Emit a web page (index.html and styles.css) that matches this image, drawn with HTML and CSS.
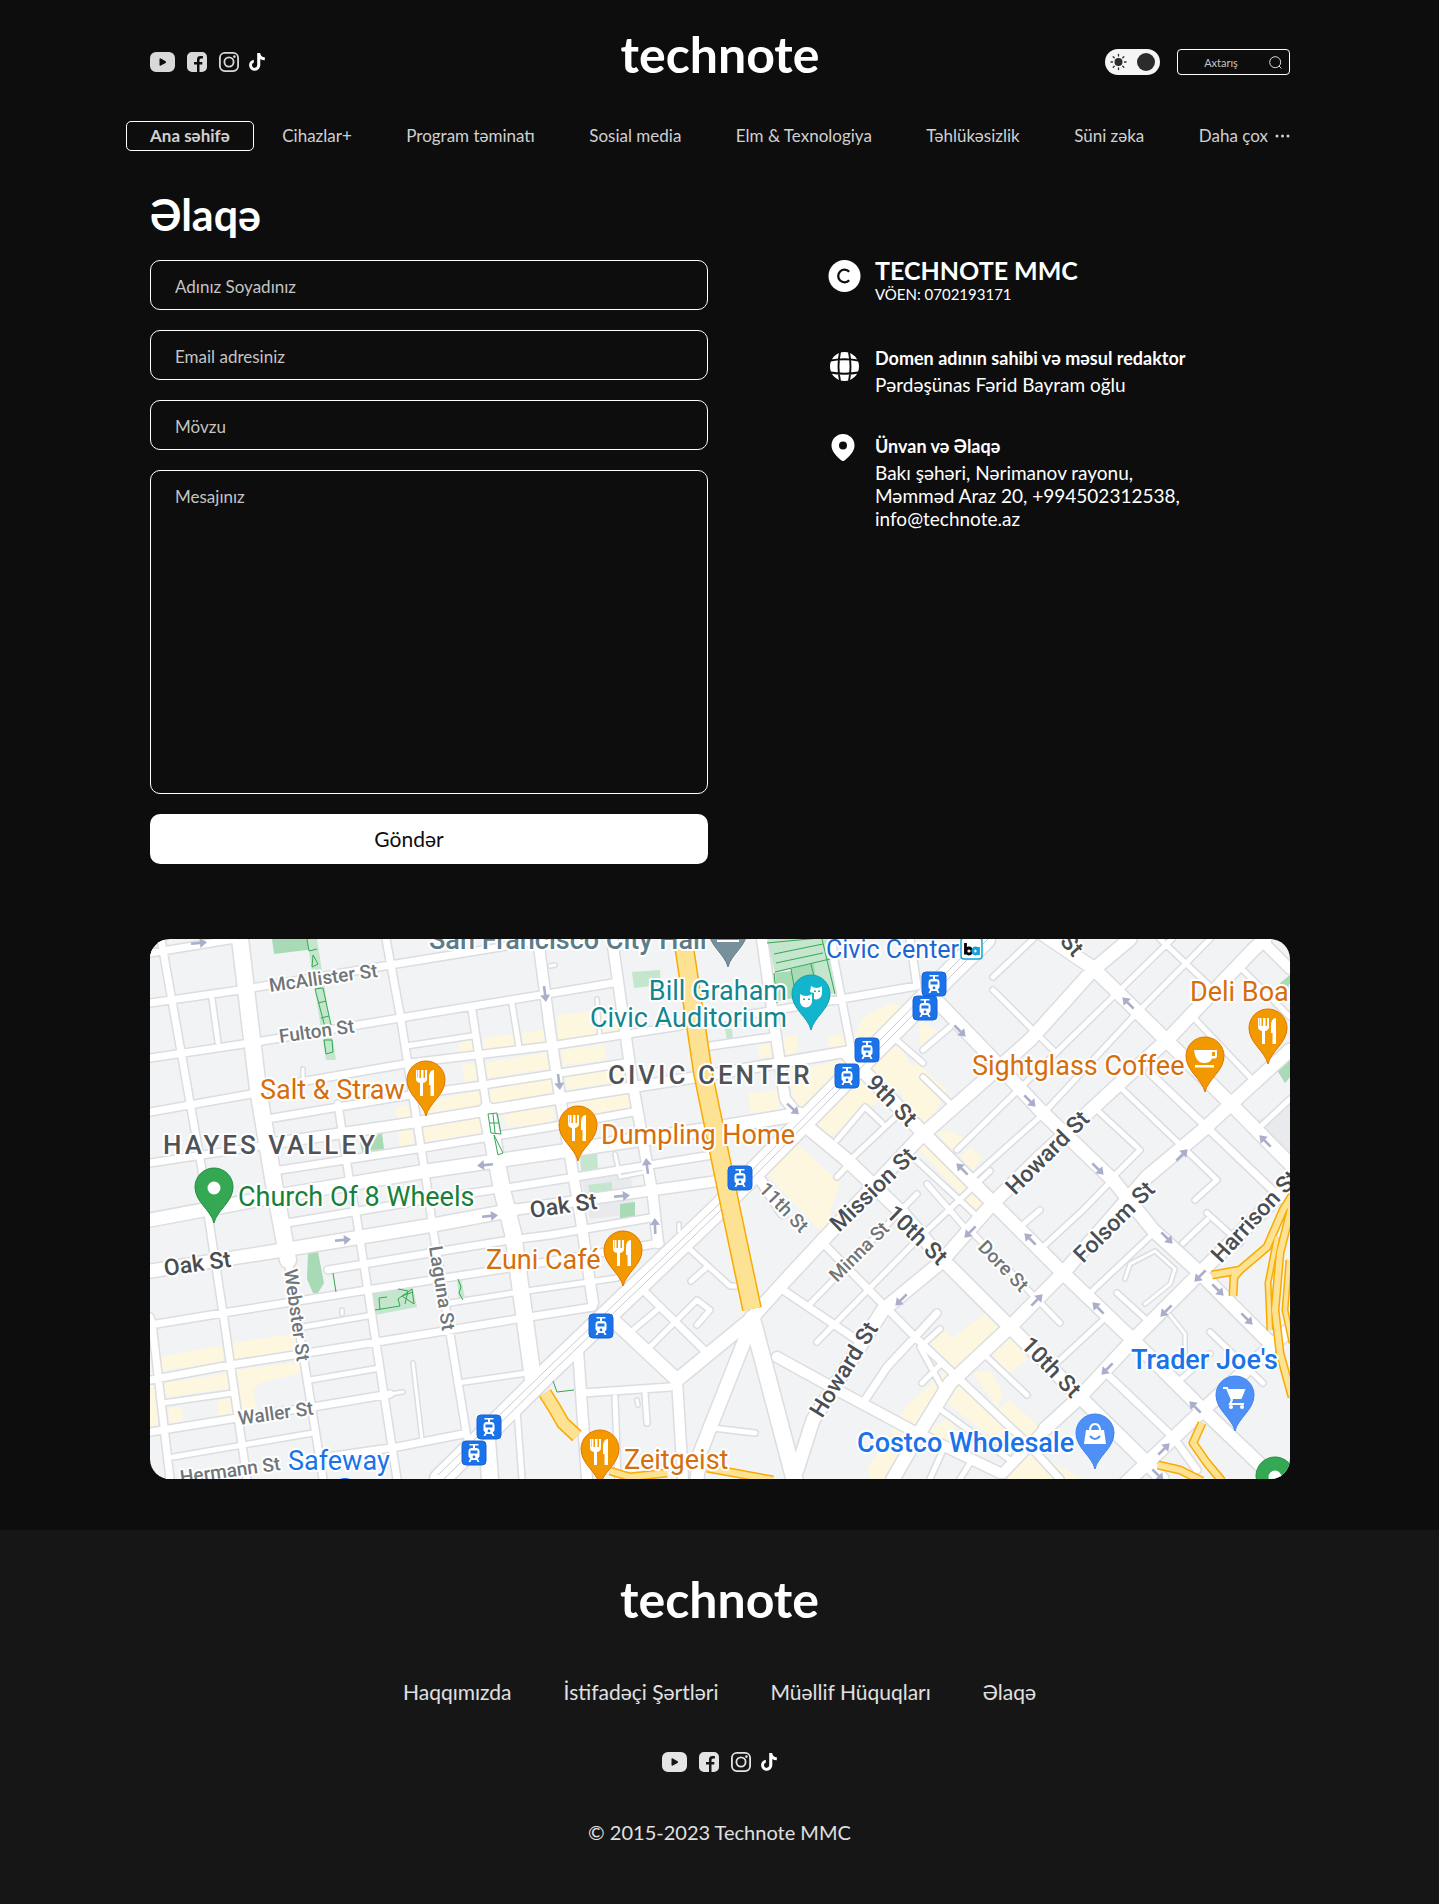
FILE: index.html
```html
<!DOCTYPE html>
<html lang="az">
<head>
<meta charset="utf-8">
<meta name="viewport" content="width=device-width, initial-scale=1">
<title>Əlaqə – technote</title>
<link rel="stylesheet" href="styles.css">
</head>
<body>
<svg class="defs" aria-hidden="true">
  <symbol id="i-youtube" viewBox="0 0 25 20"><path fill="currentColor" fill-rule="evenodd" d="M6 0h13a6 6 0 0 1 6 6v8a6 6 0 0 1-6 6H6a6 6 0 0 1-6-6V6a6 6 0 0 1 6-6zM9.500 7.200v5.600q0 1.400 1.300.8l4.800-2.700q1-.8 0-1.600l-4.800-2.800q-1.300-.7-1.300.7z"/></symbol>
  <symbol id="i-facebook" viewBox="0 0 20 20"><path fill="currentColor" d="M5 0h10a5 5 0 0 1 5 5v10a5 5 0 0 1-5 5h-2.500v-7.500h2.800V10h-2.800V8q0-1.600 1.600-1.600h1.800V4h-2.400Q10 4 10 7.400V10H7v2.500h3V20H5a5 5 0 0 1-5-5V5a5 5 0 0 1 5-5z"/></symbol>
  <symbol id="i-instagram" viewBox="0 0 20 20"><g fill="none" stroke="currentColor" stroke-width="1.800"><rect x=".9" y=".9" width="18.200" height="18.200" rx="5"/><circle cx="10" cy="10" r="4.600"/></g><circle cx="15.400" cy="4.600" r="1.300" fill="currentColor"/></symbol>
  <symbol id="i-tiktok" viewBox="0 0 16 18"><path fill="currentColor" d="M8.200 0h3q.3 3.900 4.600 4.300v3q-2.600 0-4.500-1.400v6.300a5.600 5.600 0 1 1-6.500-5.500v3.100a2.600 2.600 0 1 0 3.400 2.500z"/></symbol>
</svg>

<div class="wrap">
  <header class="top">
    <div class="social">
      <a href="#" aria-label="YouTube"><svg width="25" height="20"><use href="#i-youtube"/></svg></a>
      <a href="#" aria-label="Facebook"><svg width="20" height="20"><use href="#i-facebook"/></svg></a>
      <a href="#" aria-label="Instagram"><svg width="20" height="20"><use href="#i-instagram"/></svg></a>
      <a class="tiktok" href="#" aria-label="TikTok"><svg width="16" height="18"><use href="#i-tiktok"/></svg></a>
    </div>
    <a class="logo" href="#">technote</a>
    <div class="tools">
      <label class="theme">
        <input type="checkbox" aria-label="Tünd rejim" checked>
        <svg width="55" height="26" viewBox="0 0 55 26"><rect width="55" height="26" rx="13" fill="#f5f5f5"/><circle cx="13.500" cy="13" r="4" fill="#2b2b2b"/><path stroke="#2b2b2b" stroke-width="1.300" stroke-linecap="round" d="M13.500 5.500v1.500M13.500 19v1.500M6 13h1.500M19.500 13H21M8.200 7.700l1 1M17.800 17.300l1 1M8.200 18.300l1-1M17.800 8.700l1-1"/><circle cx="41" cy="13" r="9" fill="#2b2b2b"/></svg>
      </label>
      <label class="search">
        <input type="search" placeholder="Axtarış" aria-label="Axtarış">
        <svg width="13" height="13" viewBox="0 0 13 13" fill="none" stroke="#d9d9d9"><circle cx="6.200" cy="6.200" r="5.500"/><path d="M10.200 10.200l2 2" stroke-linecap="round"/></svg>
      </label>
    </div>
  </header>

  <nav class="menu">
    <a class="active" href="#">Ana səhifə</a>
    <a href="#">Cihazlar+</a>
    <a href="#">Program təminatı</a>
    <a href="#">Sosial media</a>
    <a href="#">Elm &amp; Texnologiya</a>
    <a href="#">Təhlükəsizlik</a>
    <a href="#">Süni zəka</a>
    <a class="more" href="#">Daha çox <svg width="15" height="4" viewBox="0 0 15 4" fill="currentColor"><circle cx="2" cy="2" r="1.500"/><circle cx="7.500" cy="2" r="1.500"/><circle cx="13" cy="2" r="1.500"/></svg></a>
  </nav>

  <main>
    <h1>Əlaqə</h1>
    <div class="columns">
      <form class="contact">
        <input type="text" placeholder="Adınız Soyadınız" aria-label="Adınız Soyadınız">
        <input type="email" placeholder="Email adresiniz" aria-label="Email adresiniz">
        <input type="text" placeholder="Mövzu" aria-label="Mövzu">
        <textarea placeholder="Mesajınız" aria-label="Mesajınız"></textarea>
        <button type="button">Göndər</button>
      </form>
      <div class="info">
        <section>
          <svg width="33" height="32" viewBox="0 0 33 32"><circle cx="16.500" cy="16" r="16" fill="#fff"/><path d="M21.200 11.800a6.300 6.300 0 1 0 0 8.400" fill="none" stroke="#0d0d0d" stroke-width="2.300"/></svg>
          <div><h2>TECHNOTE MMC</h2><p class="tax">VÖEN: 0702193171</p></div>
        </section>
        <section>
          <svg class="globe" width="33" height="29" viewBox="0 0 33 29"><circle cx="16.500" cy="14.500" r="14.500" fill="#fff"/><g fill="none" stroke="#0d0d0d" stroke-width="1.900"><path d="M12 0Q9 14.500 12 29M21 0q3 14.500 0 29M1 8.800q15.500-3 31 0M1 20.200q15.500 3 31 0"/></g></svg>
          <div><h3>Domen adının sahibi və məsul redaktor</h3><p>Pərdəşünas Fərid Bayram oğlu</p></div>
        </section>
        <section>
          <svg width="30" height="27" viewBox="0 0 30 27"><path fill="#fff" fill-rule="evenodd" d="M15 0a11.500 11.500 0 0 1 11.500 11.500c0 6-5 10.500-9.300 14.600q-2.200 1.800-4.400 0C8.500 22 3.500 17.500 3.500 11.500A11.500 11.500 0 0 1 15 0zm0 7.500a4 4 0 1 0 0 8 4 4 0 0 0 0-8z"/></svg>
          <div><h3>Ünvan və Əlaqə</h3><p>Bakı şəhəri, Nərimanov rayonu,<br>Məmməd Araz 20, +994502312538,<br>info@technote.az</p></div>
        </section>
      </div>
    </div>

    <svg class="map" viewBox="0 0 1140 540" preserveAspectRatio="xMidYMid slice" role="img" aria-label="Xəritə">
      <defs>
        <g id="roads">
          <path class="w22" d="M290 540L400 431L567 271L800 34L835 0"/>
          <path class="w16" d="M90 0L108 150L124 245L138 321M337 171L353 255L363 294L383 440M602 380L613 421L647 550M337 501L340 540"/>
          <path class="w14" d="M0 332L133 311L283 286L363 271M0 281L133 256L277 232L400 214L560 190L650 175M527 441L600 381L633 344L673 301L770 198L880 101L943 31L980 0M647 531L663 481L733 371L790 324L843 264L890 218L970 144L1020 98L1103 11L1115 0M743 540L773 488L800 444L860 388L913 334L997 238L1053 191L1082 164L1140 111M895 490L930 458L983 401L1050 334L1140 245M975 545L997 524L1053 471L1140 390M697 115L777 198L843 264L913 334L983 401L1053 471L1125 540M650 182L697 221L753 275L790 318L860 388L930 458L997 524L1012 540M783 58L837 114L890 171L963 241L1003 291L1050 334L1120 404M893 -5L943 29L1013 98L1080 164L1140 225M463 381L527 441M600 388L550 514L547 540"/>
          <path class="w10" d="M388 0L400 91L410 158L427 258L432 288L443 364M462 0L482 141L503 258L508 304M612 0L627 104L635 160L650 178M125 204L267 183L400 161L547 138L700 112M363 271L483 254L575 241M1110 0L1140 30M527 441L533 540M428 411L437 540M627 418L687 451L767 494L850 534M853 534L895 490M603 230L633 274"/>
          <path class="w8" d="M11 0L52 231L58 275L73 374L97 540M0 378L2 384L20 540M138 321L173 540M236 0L250 75L277 247L283 291L317 498M188 165L200 245L207 281L247 540M322 71L337 171M682 0L684 21L702 114M760 0L767 47L627 71L540 84M0 14L85 0M0 64L90 51L240 26L400 0M0 119L100 104L250 79L397 55L463 44M0 173L107 154M150 143L260 124L400 107L530 87M123 179L260 156L333 146L475 124M0 224L124 205M130 231L273 209L400 188L483 173M137 284L280 260L363 248L562 216M178 331L280 314L360 301L400 296L500 279M0 386L73 374L217 351L360 329L510 304M0 441L80 426L227 403L373 379L443 368M0 493L87 479L163 468L240 455M170 519L247 508L313 495M560 107L622 98M673 304L717 349L765 398L807 438L877 504L910 540M633 351L707 401M467 374L493 351L557 414M433 454L520 448M713 464L737 428L765 398L787 374M1000 134L1140 268M960 438L1023 498L1047 531"/>
          <path class="w6" d="M62 60L68 103M362 65L369 108M256 107L322 97M153 388L223 376M300 364L363 354L467 339M13 464L83 454M160 441L230 429M307 444L377 434M23 518L163 494M1010 0L1065 52M1090 28L1140 78M1043 78L1100 138M970 148L1067 241L1045 261M947 171L987 208M963 238L990 211M843 51L903 111M843 38L883 0M807 211L970 51L1022 0M823 238L890 178L983 78L1060 0M700 221L753 171M687 201L715 168L732 184M687 238L700 224M743 98L773 124M773 111L800 88M773 138L803 167M533 304L580 347L590 347M541 342L557 328M483 391L507 371M500 408L547 361L560 371L547 386M465 458L468 540M495 454L497 484M563 489L605 494M657 368L767 255M667 403L767 301L840 232M772 444L790 426M367 471L372 540M967 354L1000 384M837 418L877 456M787 468L860 521M870 288L890 271M893 308L933 271L965 238M940 354L1007 291M910 421L953 381M1033 304L1057 281M1057 274L1090 304M820 291L910 384M1060 393L1113 444M1030 441L1060 415M777 245L817 291M780 540L793 511M810 540L820 524M1107 191L1140 160M765 220L830 280M790 390L770 408L793 450"/>
          <path class="w4" d="M263 424L272 501M240 455L253 453M450 100L447 60M405 26L400 27M153 143V130M192 375V371M487 461L488 466M529 285V292M975 340L980 325L1005 312L1025 330L1020 345L995 365M1020 376L1035 395V420M495 233L470 238M465 215L470 238"/>
        </g>
        <g id="highways">
          <path class="h20" d="M533 0L553 134L581 271L602 370"/>
          <path class="h12" d="M395 454L405 470L413 484L427 497"/>
          <path class="h8" d="M1062 336L1090 331L1117 308L1133 271L1145 252M1083 357L1084 338L1090 331M1142 458L1130 414L1125 371L1130 314L1143 262M1052 484L1043 504L1057 524L1072 542M1008 526L1030 531L1052 542M460 532L480 538L517 534M557 529L623 541"/>
          <path class="h5" d="M1120 391L1118 344L1127 298M1142 404L1135 371L1139 321"/>
        </g>
        <path id="pin" d="M0 0C-3-13-19-21-19-36A19 19 0 1 1 19-36C19-21 3-13 0 0Z"/>
        <path id="fork" fill="#fff" d="M-10-46v9q0 3 4 4v13h3v-13q4-1 4-4v-9h-2v8h-1.500v-8h-2.500v8H-6.500v-8H-8v8h-.500v-8zM3-38q0-8 5-8v26H4.500v-11H3z"/>
        <g id="tram"><rect x="-12" y="-12" width="24" height="24" rx="4" fill="#1a73e8" stroke="#1b62d2"/><path fill="#fff" fill-rule="evenodd" d="M-4.500-9h9v1.500H1V-5h2q2.500.3 2.500 3v5.500L3.800 5.500 5.500 9H3.700L2.500 7h-5L-3.700 9h-1.800l1.700-3.500L-5.500 3.500V-2q0-2.700 2.500-3h2v-2.500h-3.500zM-3.500-2.500v3h7v-3zM0 2.500a1.400 1.400 0 1 0 0 2.800 1.400 1.400 0 0 0 0-2.800z"/></g>
        <path id="arrow" fill="#a9aecb" d="M-8-1.300H1V-5L8 0 1 5V1.300H-8z"/>
      </defs>
      <rect width="1140" height="540" fill="#f1f3f4"/>
      <path fill="#e8eaed" d="M430 235L480 228L485 275L440 280ZM1100 185L1140 165V215L1120 205Z"/>
      <g fill="#fef7e0">
        <path d="M308 104L323 101V114L310 117ZM333 99L365 95V108L333 112ZM372 94L395 90L397 103L373 107ZM335 124L398 113L401 129L337 139ZM339 150L403 139L404 153L340 167ZM353 174L403 166L405 184L357 188ZM275 163L330 151L332 167L270 178ZM272 188L336 177L337 193L274 203ZM245 168L258 166L260 179L247 182ZM248 191L262 189L264 204L250 208ZM312 126L326 124L327 141L315 143Z"/>
        <path d="M407 76L462 70L470 94L408 103ZM412 111L455 105L456 121L413 126ZM415 136L477 127L478 141L417 151ZM417 164L480 154L482 171L440 178ZM633 98L647 96V114L635 118ZM608 106L622 104V118L610 119ZM677 98L695 94L697 108L680 110ZM713 78L740 64L753 68L723 104L705 98ZM640 131L697 121L680 144L650 171L643 158ZM598 154L627 151L630 171L600 174ZM737 108H750L770 140L735 158L710 175L680 198L663 181ZM750 134L767 124L797 151L777 188L753 164ZM607 224L647 204L690 244L673 295L640 260ZM767 208L780 204L837 264L825 271ZM770 84L787 91L770 108ZM770 138L790 178L777 188L770 181ZM787 194L797 191L813 198V204L803 213ZM810 218L820 208L832 218L823 231Z"/>
        <path d="M10 418L72 406L74 424L12 431ZM82 404L143 395L150 411L83 421ZM13 444L78 434L80 449L17 458ZM87 431L150 423V434L110 444L103 451L107 471H92ZM18 469L32 468L33 483L20 484ZM67 461L82 459L83 474L68 477ZM0 441H6L10 485L0 488ZM777 401L790 386L803 399L837 373L850 388L807 431ZM842 414L860 396L878 420L857 435ZM793 461L813 444L847 471L860 461L890 488L870 505H850ZM823 434L840 431L853 454L847 468ZM877 511L933 540H857ZM757 466L795 433L800 450L770 490L753 540H720L717 530L740 495ZM780 490L800 478L810 500L790 510Z"/>
      </g>
      <path fill="#a8dab5" d="M122 0H165V10L124 15ZM210 203L232 194L234 210L212 213ZM158 314L168 313L174 344L168 354H163L157 340ZM1130 44L1140 36V60ZM1127 131L1140 118V138L1135 144ZM470 265L485 263V278L470 280ZM641 28L665 24L668 55L627 62L625 34L641 32Z"/>
      <path fill="#c3e6cd" d="M157 0H167L186 121H176ZM338 174H348L354 216H347ZM617 0H682L685 54L668 58L664 24L625 34ZM482 33L510 31L511 46L484 49ZM575 90L582 90L583 101H577ZM430 214L447 213L448 231L431 232ZM438 246L462 243V254L440 256ZM222 353L263 349L267 368L225 376ZM307 340H311L315 360H309Z"/>
      <use href="#roads" class="casing"/>
      <use href="#roads" class="street"/>
      <path class="green" d="M157 0L159 12L167 10M163 16L168 25L162 28ZM165 50L173 49L181 86L175 88ZM168 64L176 62M171 79L179 77M174 101H182L183 113L176 115ZM338 175L347 174L351 195L341 194ZM344 196L353 214L348 216ZM343 175L345 194M340 184H349M617 4L680 -2M624 15L673 5M626 24L673 14M625 33L680 20M641 30L646 58M661 25L668 54M624 34L627 64M672 0L685 55M183 334L186 353M308 340L311 348L309 354L313 361M225 371L250 367L248 360L262 350L264 365L252 357L263 353M230 371L229 359L237 358M248 350L258 352L255 365M403 442L407 453L424 451"/>
      <path fill="none" stroke="#c9cbd0" stroke-width="1" d="M288 536L398 429L565 269L798 32L830 0M292 542L402 433L569 273L802 36L838 0"/>
      <use href="#highways" class="hwedge"/>
      <use href="#highways" class="hw"/>

      <g>
        <use href="#arrow" transform="translate(49 4) rotate(-5)"/><use href="#arrow" transform="translate(395 55) rotate(83)"/><use href="#arrow" transform="translate(335 226) rotate(175)"/><use href="#arrow" transform="translate(409 143) rotate(83)"/><use href="#arrow" transform="translate(497 227) rotate(-97)"/><use href="#arrow" transform="translate(472 257) rotate(-5)"/><use href="#arrow" transform="translate(643 170) rotate(42)"/><use href="#arrow" transform="translate(810 92) rotate(45)"/><use href="#arrow" transform="translate(978 64) rotate(225)"/><use href="#arrow" transform="translate(880 162) rotate(45)"/><use href="#arrow" transform="translate(812 230) rotate(225)"/><use href="#arrow" transform="translate(948 230) rotate(45)"/><use href="#arrow" transform="translate(1032 216) rotate(-45)"/><use href="#arrow" transform="translate(1115 202) rotate(225)"/><use href="#arrow" transform="translate(193 301) rotate(-5)"/><use href="#arrow" transform="translate(340 277) rotate(-5)"/><use href="#arrow" transform="translate(505 287) rotate(-92)"/><use href="#arrow" transform="translate(751 361) rotate(135)"/><use href="#arrow" transform="translate(820 293) rotate(135)"/><use href="#arrow" transform="translate(880 300) rotate(225)"/><use href="#arrow" transform="translate(1017 299) rotate(45)"/><use href="#arrow" transform="translate(1050 337) rotate(135)"/><use href="#arrow" transform="translate(1068 351) rotate(45)"/><use href="#arrow" transform="translate(887 361) rotate(-45)"/><use href="#arrow" transform="translate(948 369) rotate(225)"/><use href="#arrow" transform="translate(1016 372) rotate(135)"/><use href="#arrow" transform="translate(1097 380) rotate(45)"/><use href="#arrow" transform="translate(957 430) rotate(135)"/><use href="#arrow" transform="translate(1045 468) rotate(225)"/><use href="#arrow" transform="translate(1014 510) rotate(-45)"/><use href="#arrow" transform="translate(1008 536) rotate(45)"/>
      </g>

      <g class="minor">
        <text transform="translate(120 53) rotate(-8)">McAllister St</text>
        <text transform="translate(130 104) rotate(-8)">Fulton St</text>
        <text transform="translate(134 331) rotate(82)">Webster St</text>
        <text transform="translate(279 308) rotate(81)">Laguna St</text>
        <text transform="translate(89 486) rotate(-8)">Waller St</text>
        <text transform="translate(31 545) rotate(-8)">Hermann St</text>
        <text transform="translate(608 251) rotate(46)">11th St</text>
        <text transform="translate(687 344) rotate(-45)">Minna St</text>
        <text transform="translate(827 309) rotate(46)">Dore St</text>
      </g>
      <g class="major">
        <text transform="translate(15 337) rotate(-8)">Oak St</text>
        <text transform="translate(381 279) rotate(-8)">Oak St</text>
        <text transform="translate(715 145) rotate(46)">9th St</text>
        <text transform="translate(689 294) rotate(-44)">Mission St</text>
        <text transform="translate(735 276) rotate(44)">10th St</text>
        <text transform="translate(865 257) rotate(-45)">Howard St</text>
        <text transform="translate(933 325) rotate(-45)">Folsom St</text>
        <text transform="translate(1071 325) rotate(-47)">Harrison St</text>
        <text transform="translate(909 3) rotate(48)">St</text>
        <text transform="translate(672 480) rotate(-58)">Howard St</text>
        <text transform="translate(870 407) rotate(46)">10th St</text>
      </g>
      <g class="area">
        <text x="13" y="215">HAYES VALLEY</text>
        <text x="458" y="145">CIVIC CENTER</text>
      </g>
      <g class="place">
        <text x="279" y="10" fill="#5b7c8a" class="strong">San Francisco City Hall</text>
        <text x="676" y="19" fill="#1967d2" class="station">Civic Center</text>
        <g fill="#d56e0c">
          <text x="110" y="160">Salt &amp; Straw</text>
          <text x="451" y="205">Dumpling Home</text>
          <text x="336" y="330">Zuni Café</text>
          <text x="474" y="530">Zeitgeist</text>
          <text x="822" y="136">Sightglass Coffee</text>
          <text x="1040" y="62">Deli Board</text>
        </g>
        <text x="88" y="267" fill="#188038">Church Of 8 Wheels</text>
        <g fill="#12858f" text-anchor="end">
          <text x="637" y="61">Bill Graham</text>
          <text x="637" y="88">Civic Auditorium</text>
        </g>
        <g fill="#1a73e8">
          <text x="138" y="531">Safeway</text>
          <text x="707" y="513" class="strong">Costco Wholesale</text>
          <text x="981" y="430" class="strong">Trader Joe's</text>
        </g>
      </g>

      <g transform="translate(578 28)"><use href="#pin" fill="#78909c" stroke="#607d8b"/><path stroke="#fff" stroke-width="2" d="M-11-26H11"/></g>
      <g fill="#f29900" stroke="#e37400">
        <use href="#pin" x="276" y="177"/><use href="#pin" x="428" y="222"/><use href="#pin" x="473" y="347"/><use href="#pin" x="450" y="546"/><use href="#pin" x="1055" y="153"/><use href="#pin" x="1118" y="125"/>
      </g>
      <use href="#fork" x="276" y="177"/><use href="#fork" x="428" y="222"/><use href="#fork" x="473" y="347"/><use href="#fork" x="450" y="546"/><use href="#fork" x="1118" y="125"/>
      <g transform="translate(1055 153)"><path fill="#fff" fill-rule="evenodd" d="M-11-42H12v6q0 3-5 2.500Q5-29-1-29h-1Q-10-30-11-42zM7-40v4h3v-4zM-10-27H9v2.500H-10z"/></g>
      <g transform="translate(64 284)"><use href="#pin" fill="#34a853" stroke="#1e8e3e"/><circle cy="-35" r="6.500" fill="#fff"/></g>
      <g transform="translate(1125 573)"><use href="#pin" fill="#34a853" stroke="#1e8e3e"/><circle cy="-35" r="6.500" fill="#fff"/></g>
      <g transform="translate(661 91)"><use href="#pin" fill="#12b5cb" stroke="#129eaf"/><path fill="#fff" fill-rule="evenodd" d="M-11-36Q-5-32 1-36v8q-1 5-6 5.500Q-10-23-11-28zM-8-31.500v1.500h2v-1.500zM-3-31.500v1.500h2v-1.500zM0-44Q6-40 11-44v8q-1 5-6 5.500L3-31v-6l-4-1zM3-39.500v1.500h2v-1.500zM7-39.500v1.500h2v-1.500z"/></g>
      <g transform="translate(1085 492)"><use href="#pin" fill="#4f90f7" stroke="#3b82f0"/><path fill="none" stroke="#fff" stroke-width="2" d="M-12-43h4l5 12-2 4H9"/><path fill="#fff" d="M-7-42H10.500L6.500-32H-3z"/><circle cx="-4" cy="-24" r="2" fill="#fff"/><circle cx="7" cy="-24" r="2" fill="#fff"/></g>
      <g transform="translate(945 530)"><use href="#pin" fill="#4f90f7" stroke="#3b82f0"/><path fill="#fff" d="M-9-39H9l2 14H-11z"/><path fill="none" stroke="#fff" stroke-width="2" d="M-5-38q0-7 5-7t5 7"/><path fill="none" stroke="#4f90f7" stroke-width="2" d="M-5-33Q0-27 5-33"/></g>
      <ellipse cx="195" cy="542" rx="7" ry="3" fill="#1a73e8"/>
      <use href="#tram" x="784" y="45"/><use href="#tram" x="775" y="69"/><use href="#tram" x="717" y="111"/><use href="#tram" x="697" y="137"/><use href="#tram" x="590" y="239"/><use href="#tram" x="451" y="387"/><use href="#tram" x="339" y="488"/><use href="#tram" x="324" y="514"/>
      <rect x="811" y="-1" width="21" height="21" rx="3" fill="#fff" stroke="#12a3dc" stroke-width="1.500"/>
      <g fill="none" stroke-width="2.800"><path stroke="#000" d="M815.500 4v11.500M816 12a3 3 0 1 1 3 3 3 3 0 0 1-3-3"/><path stroke="#12a3dc" d="M828.500 8v8M828 12a2.600 3 0 1 0-2.600 3 2.600 3 0 0 0 2.600-3"/></g>
    </svg>
  </main>
</div>

<footer class="foot">
  <a class="logo" href="#">technote</a>
  <nav>
    <a href="#">Haqqımızda</a>
    <a href="#">İstifadəçi Şərtləri</a>
    <a href="#">Müəllif Hüquqları</a>
    <a href="#">Əlaqə</a>
  </nav>
  <div class="social">
    <a href="#" aria-label="YouTube"><svg width="25" height="20"><use href="#i-youtube"/></svg></a>
    <a href="#" aria-label="Facebook"><svg width="20" height="20"><use href="#i-facebook"/></svg></a>
    <a href="#" aria-label="Instagram"><svg width="20" height="20"><use href="#i-instagram"/></svg></a>
    <a class="tiktok" href="#" aria-label="TikTok"><svg width="16" height="18"><use href="#i-tiktok"/></svg></a>
  </div>
  <p>© 2015-2023 Technote MMC</p>
</footer>
</body>
</html>
```
FILE: styles.css
```css
* { box-sizing: border-box; }
body {
  margin: 0;
  background: #0d0d0d;
  color: #fff;
  font-family: Lato, "Open Sans", sans-serif;
  font-size: 17px;
}
a { color: inherit; text-decoration: none; }
h1, h2, h3, p { margin: 0; }
svg { display: block; }
.defs { display: none; }

.wrap { padding: 30px 149px 51px 150px; }

.top {
  display: grid;
  grid-template-columns: 1fr auto 1fr;
  align-items: center;
  min-height: 64px;
}
.logo {
  padding-bottom: 16px;
  font-size: 50px;
  line-height: 48px;
  font-weight: 700;
}
.social {
  display: flex;
  align-items: center;
  gap: 12px;
  color: #d9d9d9;
}
.social .tiktok { margin-left: -2px; color: #fff; }
.tools {
  display: flex;
  justify-content: flex-end;
  align-items: center;
  gap: 17px;
}
.theme { position: relative; }
.theme input {
  position: absolute;
  inset: 0;
  width: 100%;
  height: 100%;
  margin: 0;
  opacity: 0;
}
.search {
  display: flex;
  align-items: center;
  width: 113px;
  height: 26px;
  padding: 0 7px;
  border: 1px solid #fff;
  border-radius: 4px;
}
.search input {
  flex: 1;
  min-width: 0;
  padding: 0;
  border: 0;
  background: none;
  color: #fff;
  font: inherit;
  font-size: 11px;
  text-align: center;
}
::placeholder { color: #c4c4c4; opacity: 1; }

.menu {
  display: flex;
  flex-wrap: wrap;
  align-items: center;
  justify-content: space-between;
  margin: 27px 0 40px -24px;
  color: #d0d0d0;
  line-height: 28px;
}
.menu .active {
  margin-right: -26px;
  padding: 0 23px;
  border: 1px solid #fff;
  border-radius: 5px;
  font-weight: 700;
}
.menu .more { display: flex; align-items: center; gap: 7px; }

h1 {
  margin-bottom: 21px;
  font-size: 43px;
  line-height: 48px;
  font-weight: 700;
}
.columns {
  display: grid;
  grid-template-columns: 558fr 462fr;
  gap: 120px;
  margin-bottom: 75px;
}
.contact { display: grid; gap: 20px; }
.contact input, .contact textarea {
  display: block;
  width: 100%;
  height: 50px;
  padding: 3px 24px 0;
  border: 1px solid #fff;
  border-radius: 10px;
  background: none;
  color: #fff;
  font: inherit;
}
.contact textarea {
  height: 324px;
  padding-top: 15px;
  line-height: 22px;
  resize: none;
}
.contact button {
  height: 50px;
  padding: 0 40px 2px 0;
  border: 0;
  border-radius: 10px;
  background: #fff;
  color: #0d0d0d;
  font: inherit;
  font-size: 21px;
}

.info { display: grid; align-content: start; gap: 38px; }
.info section { display: grid; grid-template-columns: 33px 1fr; gap: 14px; }
.globe { margin-top: 6px; }
.info h2 { font-size: 25px; line-height: 20px; font-weight: 700; }
.info h3 { margin-bottom: 3px; font-size: 18px; line-height: 24px; font-weight: 700; }
.info p { font-size: 19px; line-height: 23px; }
.info .tax { font-size: 15px; line-height: 28px; }

.map {
  width: 100%;
  height: auto;
  border-radius: 20px;
  font-family: Roboto, sans-serif;
}
.casing, .street, .hw, .hwedge { fill: none; stroke-linejoin: round; }
.casing, .street { stroke-linecap: round; }
.casing { --edge: 3px; stroke: #dcdde1; }
.street { --edge: 0px; stroke: #fff; }
.hwedge { --edge: 0px; stroke: #f9ab00; }
.hw { --edge: -3px; stroke: #fde293; }
.w22 { stroke-width: calc(20px + var(--edge)); }
.w16 { stroke-width: calc(16px + var(--edge)); }
.w14 { stroke-width: calc(13px + var(--edge)); }
.w10 { stroke-width: calc(10px + var(--edge)); }
.w8 { stroke-width: calc(7px + var(--edge)); }
.w6 { stroke-width: calc(5px + var(--edge)); }
.w4 { stroke-width: calc(3px + var(--edge)); }
.h20 { stroke-width: calc(20px + var(--edge)); }
.h12 { stroke-width: calc(14px + var(--edge)); }
.h8 { stroke-width: calc(9px + var(--edge)); }
.h5 { stroke-width: calc(7px + var(--edge)); }
.green { fill: none; stroke: #34a853; stroke-width: 1; }
.map text { paint-order: stroke; stroke: #fff; stroke-width: 4px; stroke-linejoin: round; }
.minor { font-size: 19px; fill: #70757a; font-weight: 500; }
.major { font-size: 23px; fill: #4a4d51; font-weight: 500; }
.area { font-size: 26px; fill: #4f5358; font-weight: 500; letter-spacing: 3px; }
.place { font-size: 27px; }
.place .station { font-size: 25px; }
.strong { font-weight: 500; }

.foot {
  display: flex;
  flex-direction: column;
  align-items: center;
  padding: 45px 24px 58px;
  background: #161616;
  color: #e0e0e0;
  font-size: 21px;
  line-height: 28px;
}
.foot .logo { color: #fff; }
.foot nav { display: flex; flex-wrap: wrap; gap: 52px; margin: 39px 0 46px; }
.foot .social { color: #e4e4e4; margin-bottom: 46px; }
.foot p { font-size: 20px; }

@media (max-width: 1100px) {
  .wrap { padding-left: 24px; padding-right: 24px; }
  .columns { grid-template-columns: 1fr; gap: 48px; }
  .menu { margin-left: 0; gap: 16px; }
  .menu .active { margin-right: 0; }
}
```
